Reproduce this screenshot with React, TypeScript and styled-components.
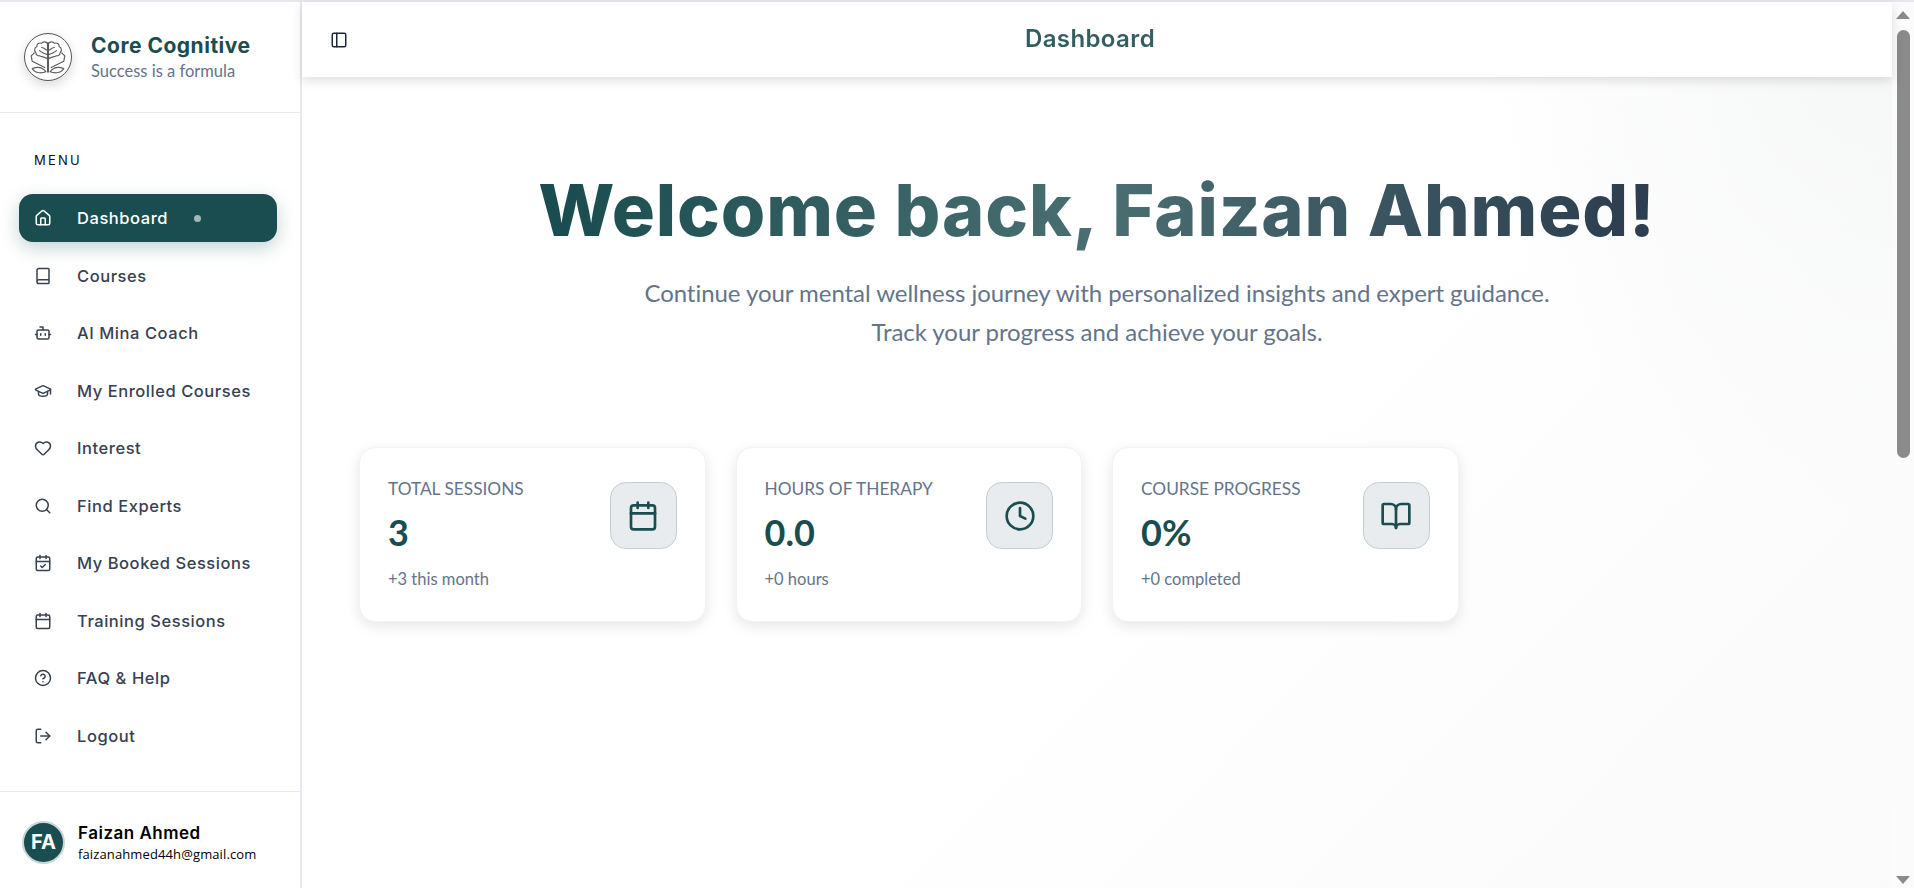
import React from "react";
import styled, { createGlobalStyle } from "styled-components";
import {
  House,
  Book,
  Bot,
  GraduationCap,
  Heart,
  Search,
  CalendarCheck,
  Calendar,
  CircleHelp,
  LogOut,
  PanelLeft,
  Clock,
  BookOpen,
} from "lucide-react";

const TEAL = "#1a4d4f";
const HEADING_FONT = `Inter, "Noto Sans", sans-serif`;
const BODY_FONT = `Lato, "Noto Sans", sans-serif`;

const menuItems = [
  { label: "Dashboard", Icon: House, active: true },
  { label: "Courses", Icon: Book },
  { label: "AI Mina Coach", Icon: Bot },
  { label: "My Enrolled Courses", Icon: GraduationCap },
  { label: "Interest", Icon: Heart },
  { label: "Find Experts", Icon: Search },
  { label: "My Booked Sessions", Icon: CalendarCheck },
  { label: "Training Sessions", Icon: Calendar },
  { label: "FAQ & Help", Icon: CircleHelp },
  { label: "Logout", Icon: LogOut },
];

const stats = [
  { label: "Total Sessions", value: "3", note: "+3 this month", Icon: Calendar },
  { label: "Hours of Therapy", value: "0.0", note: "+0 hours", Icon: Clock },
  { label: "Course Progress", value: "0%", note: "+0 completed", Icon: BookOpen },
];

const BrainLogo = () => (
  <svg viewBox="5 7 38 36" width="40" height="38" fill="none" stroke="#5c5c5c" strokeWidth="1.1" strokeLinecap="round" strokeLinejoin="round">
    <path d="M24 12v27" strokeWidth="2" />
    <path d="M24 13c-1-3-5-3-6-1-3-1-5 1-4.500 3-2.500 1-3 4-1 6 0 2 2 3 4 3 2 1 5 1 7.500 3" />
    <path d="M24 13c1-3 5-3 6-1 3-1 5 1 4.500 3 2.500 1 3 4 1 6 0 2-2 3-4 3-2 1-5 1-7.500 3" />
    <path d="M24 19c-2-1-4-3-6-3M24 23c-3-1-6-2-8-4M24 19c2-1 4-3 6-3M24 23c3-1 6-2 8-4" />
    <path d="M11 21l-3 3 1 5 12 6M37 21l3 3-1 5-12 6" />
    <path d="M22 39c-3-4-8-5-13-3 2 4 8 5 13 3zM26 39c3-4 8-5 13-3-2 4-8 5-13 3z" />
  </svg>
);

const App = () => {
  return (
    <Page>
      <GlobalStyle />
      <TopLine />
      <Shell>
        <Sidebar>
          <Brand>
            <LogoCircle>
              <BrainLogo />
            </LogoCircle>
            <BrandText>
              <BrandName>Core Cognitive</BrandName>
              <BrandTag>Success is a formula</BrandTag>
            </BrandText>
          </Brand>

          <Nav>
            <MenuTitle>MENU</MenuTitle>
            <MenuList>
              {menuItems.map(({ label, Icon, active }) => (
                <MenuItem key={label} $active={active}>
                  <Icon size={18} strokeWidth={2} />
                  <span>{label}</span>
                  {active && <ActiveDot />}
                </MenuItem>
              ))}
            </MenuList>
          </Nav>

          <UserBox>
            <Avatar>FA</Avatar>
            <UserText>
              <UserName>Faizan Ahmed</UserName>
              <UserMail>faizanahmed44h@gmail.com</UserMail>
            </UserText>
          </UserBox>
        </Sidebar>

        <Main>
          <Header>
            <PanelLeft size={18} strokeWidth={2} color="#1f2937" />
            <HeaderTitle>Dashboard</HeaderTitle>
          </Header>

          <Content>
            <Hero>
              <HeroTitle>Welcome back, Faizan Ahmed!</HeroTitle>
              <HeroText>
                Continue your mental wellness journey with personalized insights and expert guidance.
                <br />
                Track your progress and achieve your goals.
              </HeroText>
            </Hero>

            <CardGrid>
              {stats.map(({ label, value, note, Icon }) => (
                <Card key={label}>
                  <CardText>
                    <CardLabel>{label}</CardLabel>
                    <CardValue>{value}</CardValue>
                    <CardNote>{note}</CardNote>
                  </CardText>
                  <CardIcon>
                    <Icon size={32} strokeWidth={2} />
                  </CardIcon>
                </Card>
              ))}
            </CardGrid>
          </Content>
        </Main>

        <ScrollBar>
          <ArrowUp />
          <Thumb />
          <Track />
          <ArrowDown />
        </ScrollBar>
      </Shell>
    </Page>
  );
};

export default App;

const GlobalStyle = createGlobalStyle`
  html, body {
    margin: 0;
    padding: 0;
    height: 100%;
    overflow: hidden;
    background: #fff;
    font-family: ${BODY_FONT};
  }
  * {
    box-sizing: border-box;
  }
`;

const Page = styled.div`
  width: 1914px;
  height: 888px;
  display: flex;
  flex-direction: column;
  overflow: hidden;
`;

const TopLine = styled.div`
  height: 2px;
  flex: none;
  background: #e5e7eb;
`;

const Shell = styled.div`
  flex: 1;
  min-height: 0;
  display: flex;
`;

const Sidebar = styled.aside`
  width: 302px;
  flex: none;
  display: flex;
  flex-direction: column;
  border-right: 2px solid #e8e9ee;
  background: #fff;
`;

const Brand = styled.div`
  height: 111px;
  flex: none;
  display: flex;
  align-items: center;
  gap: 19px;
  padding: 0 0 1px 24px;
  border-bottom: 1px solid #e8e9ee;
`;

const LogoCircle = styled.div`
  width: 48px;
  height: 48px;
  display: flex;
  align-items: center;
  justify-content: center;
  border-radius: 50%;
  border: 1.5px solid #555;
  box-shadow: 0 4px 12px rgba(0, 0, 0, 0.15);
  background: #fff;
`;

const BrandText = styled.div`
  display: flex;
  flex-direction: column;
  gap: 2px;
`;

const BrandName = styled.div`
  font-family: ${HEADING_FONT};
  font-weight: 700;
  font-size: 21px;
  line-height: 26px;
  letter-spacing: 0.5px;
  color: ${TEAL};
`;

const BrandTag = styled.div`
  font-size: 16.5px;
  line-height: 20px;
  color: #64748b;
`;

const Nav = styled.nav`
  flex: 1;
  padding: 39px 23px 0 19px;
`;

const MenuTitle = styled.div`
  font-family: ${HEADING_FONT};
  font-weight: 400;
  font-size: 13px;
  line-height: 16px;
  letter-spacing: 2.2px;
  color: #111;
  padding-left: 15px;
  margin-bottom: 26px;
`;

const MenuList = styled.div`
  display: flex;
  flex-direction: column;
  gap: 9.5px;
`;

const MenuItem = styled.div<{ $active?: boolean }>`
  height: 48px;
  display: flex;
  align-items: center;
  gap: 25px;
  padding-left: 15px;
  border-radius: 14px;
  font-family: ${HEADING_FONT};
  font-weight: 500;
  font-size: 16.5px;
  letter-spacing: 0.55px;
  color: ${(p) => (p.$active ? "#fff" : "#374151")};
  background: ${(p) => (p.$active ? TEAL : "transparent")};
  box-shadow: ${(p) => (p.$active ? "0 6px 18px rgba(26, 77, 79, 0.25)" : "none")};

  svg {
    flex: none;
  }
`;

const ActiveDot = styled.i`
  width: 7px;
  height: 7px;
  border-radius: 50%;
  background: rgba(255, 255, 255, 0.6);
  margin-left: 1px;
`;

const UserBox = styled.div`
  height: 97px;
  flex: none;
  display: flex;
  align-items: center;
  gap: 13px;
  padding: 4px 0 0 22px;
  border-top: 1px solid #e8e9ee;
`;

const Avatar = styled.div`
  width: 43px;
  height: 43px;
  display: flex;
  align-items: center;
  justify-content: center;
  border-radius: 50%;
  border: 2.5px solid #c9d6d6;
  background: ${TEAL};
  color: #fff;
  font-family: ${HEADING_FONT};
  font-weight: 700;
  font-size: 20px;
`;

const UserText = styled.div`
  display: flex;
  flex-direction: column;
  gap: 1px;
`;

const UserName = styled.div`
  font-family: ${HEADING_FONT};
  font-weight: 600;
  font-size: 17px;
  line-height: 22px;
  letter-spacing: 0.5px;
  color: #000;
`;

const UserMail = styled.div`
  font-family: "Open Sans", sans-serif;
  font-size: 13px;
  line-height: 18px;
  letter-spacing: 0.12px;
  color: #000;
`;

const Main = styled.main`
  flex: 1;
  min-width: 0;
  display: flex;
  flex-direction: column;
  background:
    radial-gradient(ellipse 420px 520px at 100% 0%, #f5f6f6 0%, rgba(245, 246, 246, 0) 100%),
    linear-gradient(135deg, #fff 55%, #fafafb 100%);
`;

const Header = styled.header`
  height: 75px;
  flex: none;
  display: flex;
  align-items: center;
  padding: 0 28px;
  position: relative;
  background: #fff;
  box-shadow: 0 4px 10px rgba(0, 0, 0, 0.12);
`;

const HeaderTitle = styled.h1`
  flex: 1;
  margin: -2px 14px 0 -18px;
  text-align: center;
  font-family: ${HEADING_FONT};
  font-weight: 600;
  font-size: 24px;
  letter-spacing: 0.4px;
  background: linear-gradient(90deg, ${TEAL}, #4a6f72);
  -webkit-background-clip: text;
  background-clip: text;
  color: transparent;
`;

const Content = styled.div`
  flex: 1;
  padding: 0 57px;
`;

const Hero = styled.section`
  padding-top: 89px;
  text-align: center;
`;

const HeroTitle = styled.h2`
  margin: 0;
  font-family: ${HEADING_FONT};
  font-weight: 800;
  font-size: 72px;
  line-height: 88px;
  letter-spacing: 0.85px;
  background: linear-gradient(100deg, ${TEAL} 14%, #4a6f72 50%, #2c3e50 86%);
  -webkit-background-clip: text;
  background-clip: text;
  color: transparent;
`;

const HeroText = styled.p`
  margin: 19px 0 0;
  font-size: 24px;
  line-height: 39px;
  letter-spacing: -0.05px;
  color: #64748b;
`;

const CardGrid = styled.div`
  margin-top: 96px;
  display: grid;
  grid-template-columns: repeat(4, 1fr);
  gap: 30px;
`;

const Card = styled.div`
  height: 175px;
  display: flex;
  justify-content: space-between;
  align-items: flex-start;
  padding: 29px 28px 28px 28px;
  border-radius: 16px;
  border: 1px solid #f1f3f4;
  background: #fff;
  box-shadow: 0 4px 14px rgba(0, 0, 0, 0.1);
`;

const CardText = styled.div`
  display: flex;
  flex-direction: column;
`;

const CardLabel = styled.div`
  font-size: 17.3px;
  line-height: 24px;
  text-transform: uppercase;
  color: #64748b;
`;

const CardValue = styled.div`
  margin-top: 9px;
  font-weight: 700;
  font-size: 36px;
  line-height: 44px;
  color: ${TEAL};
`;

const CardNote = styled.div`
  margin-top: 13px;
  font-size: 16.5px;
  line-height: 24px;
  color: #64748b;
`;

const CardIcon = styled.div`
  width: 67px;
  height: 67px;
  margin-top: 5px;
  display: flex;
  align-items: center;
  justify-content: center;
  border-radius: 16px;
  border: 1px solid #c3d0d0;
  background: #e8ecee;
  color: ${TEAL};
`;

const ScrollBar = styled.div`
  width: 22px;
  flex: none;
  display: flex;
  flex-direction: column;
  align-items: center;
  background: #fbfbfb;
  padding: 9px 0 4px;
`;

const ArrowUp = styled.i`
  width: 0;
  height: 0;
  flex: none;
  border-left: 7px solid transparent;
  border-right: 7px solid transparent;
  border-bottom: 8px solid #8a8a8a;
`;

const ArrowDown = styled.i`
  width: 0;
  height: 0;
  flex: none;
  border-left: 7px solid transparent;
  border-right: 7px solid transparent;
  border-top: 8px solid #8a8a8a;
`;

const Thumb = styled.div`
  width: 13px;
  height: 428px;
  flex: none;
  margin-top: 11px;
  border-radius: 7px;
  background: #8a8a8a;
`;

const Track = styled.div`
  flex: 1;
`;
